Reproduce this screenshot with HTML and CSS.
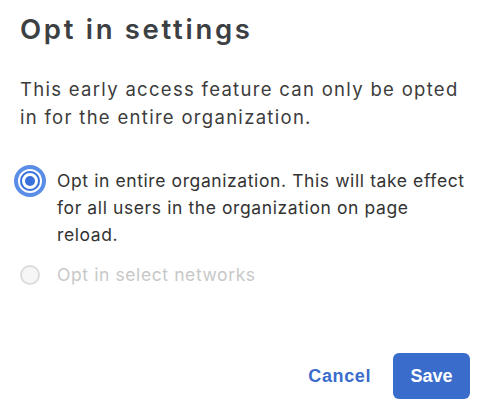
FILE: index.html
```html
<!DOCTYPE html>
<html>
<head>
<meta charset="utf-8">
<link rel="stylesheet" href="styles.css">
</head>
<body>
<div class="dialog">
  <h1 class="title">Opt in settings</h1>
  <p class="desc">This early access feature can only be opted in for the entire organization.</p>
  <div class="options">
    <label class="option">
      <span class="radio radio-checked"><span class="dot"></span></span>
      <span class="option-text">Opt in entire organization. This will take effect for all users in the organization on page reload.</span>
    </label>
    <label class="option option-disabled">
      <span class="radio radio-disabled"></span>
      <span class="option-text">Opt in select networks</span>
    </label>
  </div>
  <div class="actions">
    <button class="btn btn-text">Cancel</button>
    <button class="btn btn-primary">Save</button>
  </div>
</div>
</body>
</html>
```
FILE: styles.css
```css
html, body {
  margin: 0;
  padding: 0;
  background: #fff;
}
.dialog {
  width: 480px;
  height: 412px;
  box-sizing: border-box;
  padding: 12px 12px 13px 20px;
  display: flex;
  flex-direction: column;
}
.title {
  margin: 0;
  font-family: Inter, sans-serif;
  font-weight: 600;
  font-size: 27.5px;
  line-height: 34px;
  letter-spacing: 2.7px;
  color: #3c4043;
}
.desc {
  margin: 29px 0 0 0;
  font-family: Inter, sans-serif;
  font-size: 18.5px;
  line-height: 28px;
  letter-spacing: 1.3px;
  color: #3c3c3c;
}
.options {
  margin-top: 36px;
  display: flex;
  flex-direction: column;
  gap: 13px;
}
.option {
  display: flex;
  align-items: flex-start;
  gap: 17px;
}
.option-text {
  font-family: Inter, sans-serif;
  font-size: 17.5px;
  line-height: 27px;
  letter-spacing: 0.6px;
  color: #333;
}
.option-disabled .option-text {
  color: #c8c8c8;
}
.radio {
  flex: none;
  width: 20px;
  height: 20px;
  box-sizing: border-box;
  border-radius: 50%;
  margin-top: 3.5px;
  display: flex;
  align-items: center;
  justify-content: center;
}
.radio-checked {
  border: 2px solid #3a70dc;
  box-shadow: 0 0 0 2px #fff, 0 0 0 6px #5a8de6;
}
.dot {
  width: 10px;
  height: 10px;
  border-radius: 50%;
  background: #3a70dc;
}
.radio-disabled {
  border: 2px solid #dcdcdc;
  background: #f6f6f6;
}
.actions {
  margin-top: auto;
  display: flex;
  justify-content: flex-end;
  align-items: center;
  gap: 22px;
}
.btn {
  font-family: "Liberation Sans", Arial, sans-serif;
  font-weight: 700;
  font-size: 18px;
  border: none;
  cursor: pointer;
}
.btn-text {
  background: none;
  color: #3a6ccc;
  padding: 0;
  letter-spacing: 0.6px;
}
.btn-primary {
  background: #3a6ccc;
  color: #fff;
  width: 77px;
  height: 46px;
  border-radius: 6px;
  padding: 0;
  margin-right: -2px;
}
```
